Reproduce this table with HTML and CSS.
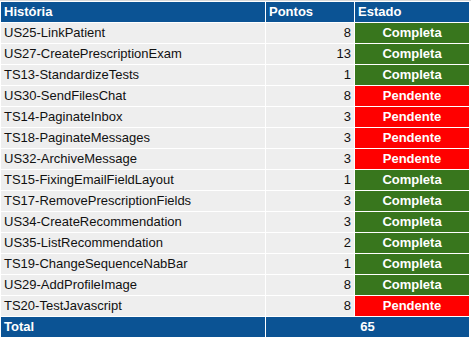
FILE: index.html
```html
<!DOCTYPE html>
<html>
<head>
<meta charset="utf-8">
<link rel="stylesheet" href="styles.css">
</head>
<body>
<table class="sprint">
  <colgroup>
    <col class="c-hist">
    <col class="c-pts">
    <col class="c-est">
  </colgroup>
  <thead>
    <tr class="head">
      <th class="left">História</th>
      <th class="left">Pontos</th>
      <th class="left">Estado</th>
    </tr>
  </thead>
  <tbody>
    <tr><td>US25-LinkPatient</td><td class="num">8</td><td class="st ok">Completa</td></tr>
    <tr><td>US27-CreatePrescriptionExam</td><td class="num">13</td><td class="st ok">Completa</td></tr>
    <tr><td>TS13-StandardizeTests</td><td class="num">1</td><td class="st ok">Completa</td></tr>
    <tr><td>US30-SendFilesChat</td><td class="num">8</td><td class="st pend">Pendente</td></tr>
    <tr><td>TS14-PaginateInbox</td><td class="num">3</td><td class="st pend">Pendente</td></tr>
    <tr><td>TS18-PaginateMessages</td><td class="num">3</td><td class="st pend">Pendente</td></tr>
    <tr><td>US32-ArchiveMessage</td><td class="num">3</td><td class="st pend">Pendente</td></tr>
    <tr><td>TS15-FixingEmailFieldLayout</td><td class="num">1</td><td class="st ok">Completa</td></tr>
    <tr><td>TS17-RemovePrescriptionFields</td><td class="num">3</td><td class="st ok">Completa</td></tr>
    <tr><td>US34-CreateRecommendation</td><td class="num">3</td><td class="st ok">Completa</td></tr>
    <tr><td>US35-ListRecommendation</td><td class="num">2</td><td class="st ok">Completa</td></tr>
    <tr><td>TS19-ChangeSequenceNabBar</td><td class="num">1</td><td class="st ok">Completa</td></tr>
    <tr><td>US29-AddProfileImage</td><td class="num">8</td><td class="st ok">Completa</td></tr>
    <tr><td>TS20-TestJavascript</td><td class="num">8</td><td class="st pend">Pendente</td></tr>
  </tbody>
  <tfoot>
    <tr class="head">
      <th class="left">Total</th>
      <th colspan="2" class="center">65</th>
    </tr>
  </tfoot>
</table>
</body>
</html>
```
FILE: styles.css
```css
html, body {
  margin: 0;
  padding: 0;
  background: #ffffff;
}

body {
  font-family: "Liberation Sans", Arial, sans-serif;
  font-size: 13px;
  color: #111111;
  border-top: 1px solid #d8d8d8;
}

.sprint {
  border-collapse: separate;
  border-spacing: 1px;
  table-layout: fixed;
  width: 470px;
}

.c-hist { width: 264px; }
.c-pts { width: 88px; }
.c-est { width: 114px; }

.sprint th,
.sprint td {
  height: 20px;
  padding: 0 3px;
  box-sizing: border-box;
  line-height: 20px;
  white-space: nowrap;
  overflow: hidden;
}

.head th {
  background: #0b5394;
  color: #ffffff;
  font-weight: bold;
}

.left { text-align: left; }
.center { text-align: center; }

.sprint td {
  background: #eeeeee;
}

.sprint td.num {
  text-align: right;
}

.sprint td.st {
  text-align: center;
  color: #ffffff;
  font-weight: bold;
}

.sprint td.ok { background: #38761d; }
.sprint td.pend { background: #ff0000; }
```
